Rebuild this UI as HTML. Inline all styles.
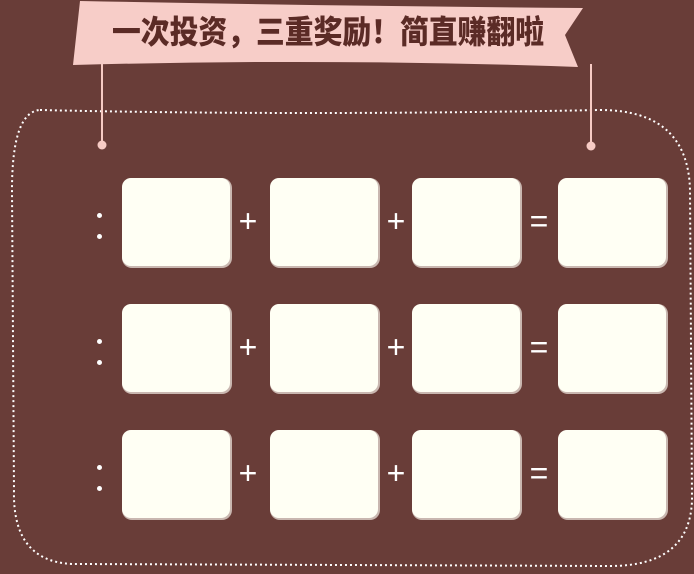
<!DOCTYPE html><html><head><meta charset="utf-8"><style>
body{margin:0;width:694px;height:574px;background:#693d38;overflow:hidden;position:relative;font-family:"Liberation Sans","Noto Sans CJK SC",sans-serif}
.b{position:absolute;width:108px;height:88px;background:#fffff4;border-radius:9px;box-shadow:1px 1px 0 1px #c9b7b0}
.o{position:absolute;color:#fff;font-size:32px;line-height:1;width:30px;text-align:center}
.d{position:absolute;width:5px;height:5px;border-radius:50%;background:#fff}
</style></head><body>
<svg width="694" height="574" style="position:absolute;left:0;top:0">
<path d="M40 110 Q300 116 600 110 Q688 110 690 190 L692 500 Q690 566 610 566 L80 564 Q12 566 14 490 L12 190 Q12 112 40 110 Z" fill="none" stroke="#fff" stroke-width="2" stroke-dasharray="2 3"/>
<line x1="102" y1="64" x2="102" y2="145" stroke="#f7cbc4" stroke-width="2"/>
<line x1="591" y1="64" x2="591" y2="146" stroke="#f7cbc4" stroke-width="2"/>
<circle cx="102" cy="145" r="4.5" fill="#f7cbc4"/><circle cx="591" cy="146" r="4.5" fill="#f7cbc4"/>
<path d="M80 1 Q330 6 583 8 L565 35 L578 67 Q330 58 73 65 Z" fill="#f7cdc8"/>
</svg>
<div style="position:absolute;left:88px;top:13px;width:480px;text-align:center;font-size:32px;font-weight:900;color:#5b2b26;white-space:nowrap;line-height:38px;transform:scaleX(0.9)">一次投资，三重奖励！简直赚翻啦</div>
<div class="b" style="left:122px;top:178px"></div><div class="b" style="left:270px;top:178px"></div><div class="b" style="left:412px;top:178px"></div><div class="b" style="left:558px;top:178px"></div>
<div class="b" style="left:122px;top:304px"></div><div class="b" style="left:270px;top:304px"></div><div class="b" style="left:412px;top:304px"></div><div class="b" style="left:558px;top:304px"></div>
<div class="b" style="left:122px;top:430px"></div><div class="b" style="left:270px;top:430px"></div><div class="b" style="left:412px;top:430px"></div><div class="b" style="left:558px;top:430px"></div>
<div class="d" style="left:97px;top:213px"></div><div class="d" style="left:97px;top:234px"></div>
<div class="d" style="left:97px;top:339px"></div><div class="d" style="left:97px;top:360px"></div>
<div class="d" style="left:97px;top:465px"></div><div class="d" style="left:97px;top:486px"></div>
<div class="o" style="left:233px;top:205px">+</div><div class="o" style="left:381px;top:205px">+</div><div class="o" style="left:524px;top:205px">=</div>
<div class="o" style="left:233px;top:331px">+</div><div class="o" style="left:381px;top:331px">+</div><div class="o" style="left:524px;top:331px">=</div>
<div class="o" style="left:233px;top:457px">+</div><div class="o" style="left:381px;top:457px">+</div><div class="o" style="left:524px;top:457px">=</div>
</body></html>
